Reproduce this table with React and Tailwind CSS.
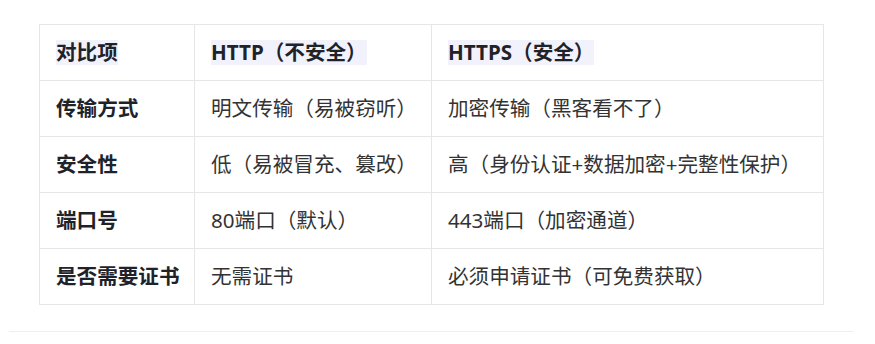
const rows = [
  ['传输方式', '明文传输（易被窃听）', '加密传输（黑客看不了）'],
  ['安全性', '低（易被冒充、篡改）', '高（身份认证+数据加密+完整性保护）'],
  ['端口号', '80端口（默认）', '443端口（加密通道）'],
  ['是否需要证书', '无需证书', '必须申请证书（可免费获取）'],
];

const head = ['对比项', 'HTTP（不安全）', 'HTTPS（安全）'];

export default function App() {
  return (
    <div
      className="w-[875px] h-[344px] bg-white pt-[24px] pl-[9px] pr-[21px] text-[#333] text-[20.6px]"
      style={{ fontFamily: '"Noto Sans", "Noto Sans CJK SC", sans-serif' }}
    >
      <table className="ml-[30px] w-[784px] border-collapse table-fixed">
        <colgroup>
          <col className="w-[155px]" />
          <col className="w-[237px]" />
          <col className="w-[392px]" />
        </colgroup>
        <thead>
          <tr>
            {head.map((h) => (
              <th key={h} className="h-[56px] border border-[#e6e6e6] px-4 text-left font-bold text-[#1f2329] align-middle">
                <span className="inline-block h-[25px] leading-[25px] bg-[#f2f2fd]">{h}</span>
              </th>
            ))}
          </tr>
        </thead>
        <tbody>
          {rows.map((r) => (
            <tr key={r[0]}>
              <td className="h-[56px] border border-[#e6e6e6] px-4 font-bold text-[#1f2329] whitespace-nowrap">{r[0]}</td>
              <td className="h-[56px] border border-[#e6e6e6] px-4 whitespace-nowrap">{r[1]}</td>
              <td className="h-[56px] border border-[#e6e6e6] px-4 whitespace-nowrap">{r[2]}</td>
            </tr>
          ))}
        </tbody>
      </table>
      <div className="mt-[26px] h-px bg-[#efefef]" />
    </div>
  );
}
